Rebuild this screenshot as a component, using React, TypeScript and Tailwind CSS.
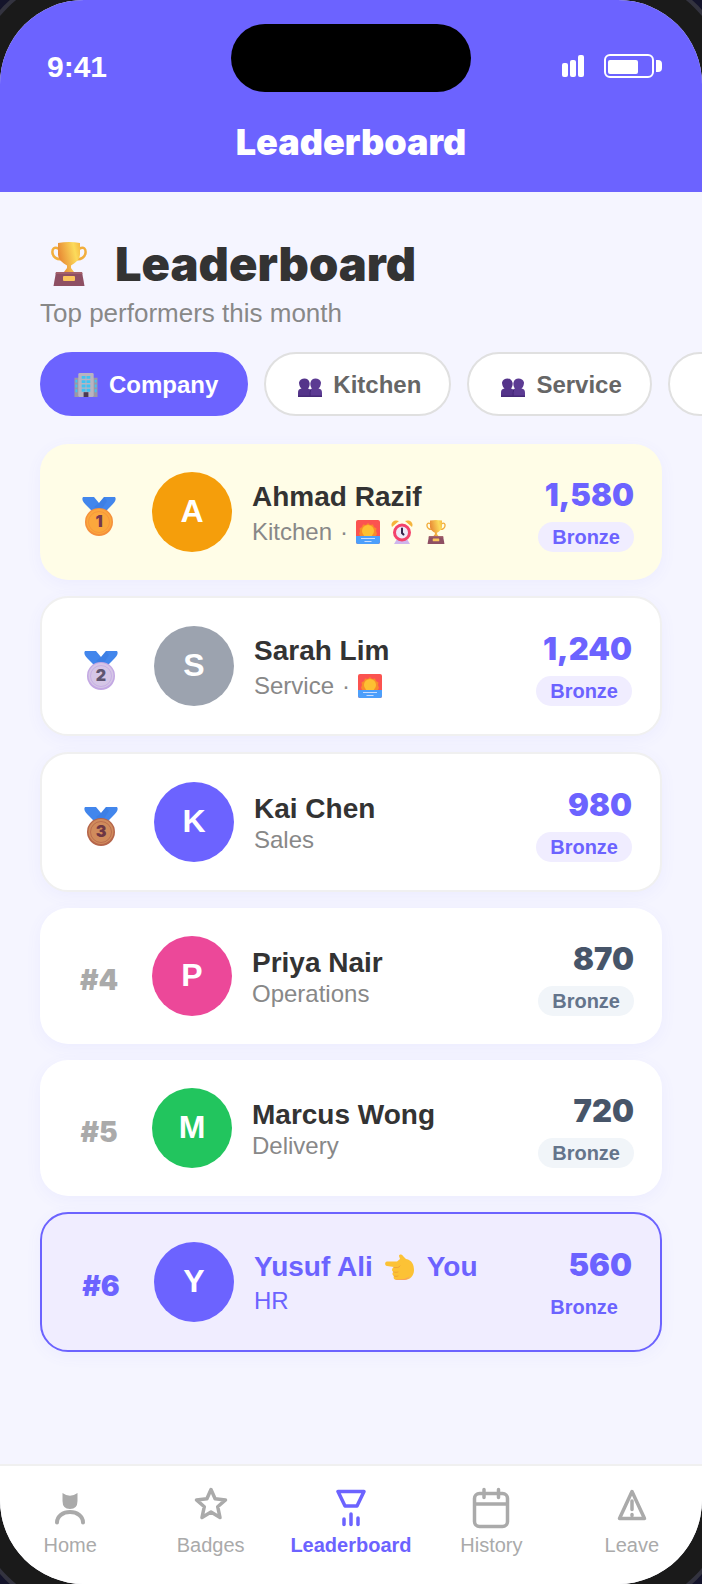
import { useState, type ReactNode } from 'react'

interface Member {
  rank: number
  name: string
  team: string
  points: string
  avatar: string
  awards?: string[]
  me?: boolean
}

const members: Member[] = [
  { rank: 1, name: 'Ahmad Razif', team: 'Kitchen', points: '1,580', avatar: 'bg-[#f59e0b]', awards: ['sunrise', 'clock', 'trophy'] },
  { rank: 2, name: 'Sarah Lim', team: 'Service', points: '1,240', avatar: 'bg-[#9ca3af]', awards: ['sunrise'] },
  { rank: 3, name: 'Kai Chen', team: 'Sales', points: '980', avatar: 'bg-[#6c63ff]' },
  { rank: 4, name: 'Priya Nair', team: 'Operations', points: '870', avatar: 'bg-[#ec4899]' },
  { rank: 5, name: 'Marcus Wong', team: 'Delivery', points: '720', avatar: 'bg-[#22c55e]' },
  { rank: 6, name: 'Yusuf Ali', team: 'HR', points: '560', avatar: 'bg-[#6c63ff]', me: true },
]

function Trophy({ className }: { className: string }) {
  return (
    <svg viewBox="0 0 36 44" className={className} aria-hidden="true">
      <defs>
        <linearGradient id="cup" x1="0" x2="1" y1="0.3" y2="0">
          <stop offset="0" stopColor="#e88b35" />
          <stop offset="0.7" stopColor="#fcdb5b" />
          <stop offset="1" stopColor="#f6b840" />
        </linearGradient>
      </defs>
      <path d="M8 7C3 4 1 7 1.500 11S6 18 11 17M28 7C33 4 35 7 34.500 11S30 18 25 17" fill="none" stroke="#f2ae3d" strokeWidth="2.500" />
      <path d="M7 1Q18-1 29 1V12C29 18 24 21 20 23.500V26L23 30H13L16 26V23.500C12 21 7 18 7 12Z" fill="url(#cup)" />
      <path d="M5 30H31L33.500 44H2.500Z" fill="#8e4f63" />
      <path d="M5 30H31L31.500 32H4.500Z" fill="#a3606a" />
      <rect x="12" y="34" width="12" height="5" rx="1" fill="#fbc45b" />
    </svg>
  )
}

function Building() {
  return (
    <svg viewBox="0 0 24 25" className="h-6 w-6" aria-hidden="true">
      <path d="M0 5h6v20H0zM18 5h6v20h-6z" fill="#9b98a6" />
      <rect x="4" y="0" width="16" height="25" rx="1.500" fill="#b9b4c0" />
      <path d="M1 7h2v3H1zm0 5h2v3H1zm0 5h2v3H1zM21 7h2v3h-2zm0 5h2v3h-2zm0 5h2v3h-2zM7.500 3h4v3h-4zm5 0h4v3h-4zm-5 4.500h4v3h-4zm5 0h4v3h-4zm-5 4.500h4v3h-4zm5 0h4v3h-4zm-5 4.500h4v3h-4zm5 0h4v3h-4z" fill="#41c3f2" />
      <rect x="9.500" y="20" width="5" height="5" fill="#4b3b52" />
    </svg>
  )
}

function People() {
  return (
    <svg viewBox="0 0 24 24" className="h-6 w-6" aria-hidden="true">
      <path d="M0 24V20C0 17 1 16 3.500 15.500C1.500 14 1 11 1 9.500C1.500 7 4 5.500 6.500 5.500S11 7 11.500 9.500C12 11 11.500 14 10 15.500C12 16 13 17 13 20V24Z" fill="#54348a" />
      <path d="M11 24V20C11 17 12 16 14 15.500C12.500 14 12 11 12.500 9.500C13 7 15 5.500 17.500 5.500S22.500 7 23 9.500C23 11 22.500 14 20.500 15.500C23 16 24 17 24 20V24Z" fill="#5c3b93" />
      <path d="M12 24V19.500L12.500 17" fill="none" stroke="#3c2171" />
      <path d="M0 22.500H24V24H0Z" fill="#462a78" />
    </svg>
  )
}

function Sunrise() {
  return (
    <svg viewBox="0 0 24 24" className="h-6 w-6" aria-hidden="true">
      <rect width="24" height="24" rx="2" fill="#fb5350" />
      <path d="M12 3L14 5L17 4.500L18 7L20.500 8.500L20 11L21 14L19 17H5L3 14L4 11L3.500 8.500L6 7L7 4.500L10 5Z" fill="#f98b2b" />
      <circle cx="12" cy="11" r="6" fill="#fdc032" />
      <path d="M0 16H24V22A2 2 0 0 1 22 24H2A2 2 0 0 1 0 22Z" fill="#4c9ffb" />
      <path d="M5 18.500H19M8.500 21.500H15.500" stroke="#c9ddff" strokeWidth="1.200" />
    </svg>
  )
}

function AlarmClock() {
  return (
    <svg viewBox="0 0 24 24" className="h-6 w-6" aria-hidden="true">
      <path d="M4 24L7 19H17L20 24Z" fill="#cfb6ec" />
      <path d="M2 7C0 3 4-1 9 1ZM22 7C24 3 20-1 15 1Z" fill="#f5b53c" />
      <circle cx="12" cy="12.500" r="7.500" fill="#eee9f8" stroke="#f4426c" strokeWidth="3" />
      <path d="M12 8.500V13L13.500 14.500" fill="none" stroke="#35244c" strokeWidth="2" strokeLinecap="round" />
    </svg>
  )
}

function PointLeft() {
  return (
    <svg viewBox="0 0 30 26" className="h-[26px] w-[30px]" aria-hidden="true">
      <path d="M2 7.500H12L15 5L14 2C14 0 17 0 18 2L21 5C27 6 29 11 29 16C29 22 25 26 19 26H12C9 26 8 24 9 22C7 21 7 19 8.500 18C6.500 17 6.500 14 9 13L2 12C-.5 11.500-.5 8 2 7.500Z" fill="#fcc235" />
      <path d="M9 22C10 22.500 12 22.500 13 22M8.500 18C10 18.500 12 18.500 13 18M9 13.500C12 13.500 14 14 15 12" fill="none" stroke="#f0a535" strokeLinecap="round" />
      <path d="M10 25Q18 27 25 22.500Q22 26 18 26H12Z" fill="#f79a68" />
    </svg>
  )
}

function Medal({ rank }: { rank: number }) {
  const rim = ['#f5903c', '#c3a8e3', '#b5654a'][rank - 1]
  const face = ['#fba73c', '#d5c6e6', '#d08b5c'][rank - 1]
  const ink = ['#74384f', '#5f5570', '#6d3644'][rank - 1]
  return (
    <svg viewBox="0 0 34 39" className="h-[39px] w-[34px]" role="img" aria-label={`Rank ${rank}`}>
      <path d="M1 0H12L17 6L22 0H33C35 3 32 6 29 9L24 14H10L5 9C2 6-1 3 1 0Z" fill="#4286ec" />
      <path d="M17 6L22 0L25 4L20 12H14L12 10Z" fill="#3170d3" opacity="0.300" />
      <circle cx="17" cy="25" r="14" fill={rim} />
      <circle cx="17" cy="24.500" r="12.500" fill={face} />
      <circle cx="17" cy="25" r="10.500" fill="none" stroke={rim} strokeWidth="0.800" />
      <text x="17" y="30" textAnchor="middle" fill={ink} className="font-[Inter] text-[16px] font-black">{rank}</text>
    </svg>
  )
}

function Award({ kind }: { kind: string }) {
  if (kind === 'sunrise') return <Sunrise />
  if (kind === 'clock') return <AlarmClock />
  return <Trophy className="h-6 w-6" />
}

function Row({ m }: { m: Member }) {
  let card = 'bg-white'
  if (m.rank === 1) card = 'bg-[#fffde7]'
  else if (m.me) card = 'border-2 border-[#6c63ff] bg-[#f0edff]'
  else if (m.rank <= 3) card = 'border-2 border-[#f0f0f0] bg-white'
  const strong = m.rank <= 3 || m.me

  let gap = 'mt-[3px]'
  if (m.awards) gap = 'mt-[7px]'
  else if (m.me) gap = 'mt-[6px]'

  return (
    <li className={`flex items-center gap-5 rounded-[28px] p-7 shadow-[0_4px_16px_rgba(108,99,255,0.06)] ${card}`}>
      <div className="flex w-16 shrink-0 justify-center pt-2 pr-[2px]">
        {m.rank <= 3 ? (
          <Medal rank={m.rank} />
        ) : (
          <span className={`font-[Inter,sans-serif] text-[28px] leading-8 font-black ${m.me ? 'text-[#6c63ff]' : 'text-[#aaa]'}`}>
            #{m.rank}
          </span>
        )}
      </div>
      <div className={`flex size-20 shrink-0 items-center justify-center rounded-full pb-[2px] text-[32px] font-bold text-white ${m.avatar}`}>
        {m.name[0]}
      </div>
      <div className="min-w-0 flex-1">
        <div className={`flex items-center gap-3 text-[28px] leading-8 font-bold ${m.me ? 'text-[#6c63ff]' : 'text-[#333]'}`}>
          {m.name}
          {m.me && <><PointLeft /> You</>}
        </div>
        <div className={`flex items-center text-2xl leading-6 ${gap} ${m.me ? 'text-[#6c63ff]' : 'text-[#888]'}`}>
          {m.team}
          {m.awards && (
            <>
              <span className="mx-2">·</span>
              <span className="flex gap-[10px]">
                {m.awards.map((a) => <Award key={a} kind={a} />)}
              </span>
            </>
          )}
        </div>
      </div>
      <div className="flex shrink-0 flex-col items-end gap-1">
        <span className={`font-[Inter,sans-serif] text-[31px] leading-[46px] font-black ${strong ? 'text-[#6c63ff]' : 'text-[#475569]'}`}>
          {m.points}
        </span>
        <span className={`rounded-full px-[14px] text-xl leading-[30px] font-bold ${strong ? 'bg-[#f0edff] text-[#6c63ff]' : 'bg-[#f1f5f9] text-[#64748b]'}`}>
          Bronze
        </span>
      </div>
    </li>
  )
}

const tabs: { label: string; icon: ReactNode }[] = [
  {
    label: 'Home',
    icon: (
      <>
        <path d="M16.500 7Q24 12.500 31.500 7V15Q31.500 23 24 23T16.500 15Z" fill="currentColor" stroke="none" />
        <path d="M11 36.500C11 30 17 26 24 26S37 30 37 36.500" strokeWidth="4" />
      </>
    ),
  },
  {
    label: 'Badges',
    icon: <path d="M24 3.500L28.100 12.800L38.500 13.900L30.700 20.700L33 31.500L24 26L15 31.500L17.300 20.700L9.500 13.900L19.900 12.800Z" />,
  },
  {
    label: 'Leaderboard',
    icon: <path d="M11 5.500H37L30 20H18ZM17 33V38.500M24 28V38.500M31 32V38.500" />,
  },
  {
    label: 'History',
    icon: (
      <>
        <rect x="7.500" y="7.500" width="33" height="33" rx="5" />
        <path d="M8 18H40M17 3.500V11.500M31.500 3.500V11.500" />
      </>
    ),
  },
  {
    label: 'Leave',
    icon: <path d="M24 5.500L36.500 32.500H11.500ZM24 15V23.500M24 28.500V29.500" />,
  },
]

export default function App() {
  const [group, setGroup] = useState('Company')

  return (
    <div className="min-h-screen overflow-hidden bg-[#14142b] font-['Liberation_Sans',Arial,sans-serif]">
      <div className="flex min-h-screen flex-col overflow-hidden rounded-[84px] bg-[#f5f5ff] shadow-[0_0_0_24px_#1a1a1a,0_0_0_28px_#33333f]">
        <header className="bg-[#6c63ff] pt-6 pb-6 text-white">
          <div className="grid h-[68px] grid-cols-[1fr_auto_1fr] items-center">
            <span className="pt-[18px] pl-[47px] text-[30px] leading-9 font-bold">9:41</span>
            <div className="h-[68px] w-60 rounded-full bg-black" />
            <div className="flex items-center justify-end gap-5 pt-4 pr-10">
              <div className="flex h-[22px] items-end gap-[2px]">
                <i className="h-[14px] w-[6px] rounded-[2px] bg-white" />
                <i className="h-[17px] w-[6px] rounded-[2px] bg-white" />
                <i className="h-[22px] w-[6px] rounded-[2px] bg-white" />
              </div>
              <div className="flex items-center gap-[2px]">
                <div className="h-6 w-[50px] rounded-[6px] border-2 border-white px-[2px] pt-1">
                  <div className="h-[14px] w-[30px] rounded-[2px] bg-white" />
                </div>
                <div className="h-3 w-[6px] rounded-r-[4px] bg-white" />
              </div>
            </div>
          </div>
          <div className="mt-6 text-center font-[Inter,sans-serif] text-[36px] leading-[52px] font-black">Leaderboard</div>
        </header>

        <main className="flex-1 px-10 pt-10 pb-10">
          <h1 className="flex items-center pl-[11px] font-[Inter,sans-serif] text-[47px] leading-[64px] font-black text-[#333]">
            <Trophy className="mr-7 h-11 w-9" />
            Leaderboard
          </h1>
          <p className="text-[26px] leading-[34px] text-[#888]">Top performers this month</p>

          <div className="-mr-10 mt-[22px] flex gap-4 overflow-x-auto [scrollbar-width:none]">
            {['Company', 'Kitchen', 'Service', 'Sales'].map((g) => (
              <button
                key={g}
                onClick={() => setGroup(g)}
                className={`flex h-16 shrink-0 items-center gap-[11px] rounded-full border-2 pr-7 pl-8 pt-[2px] text-2xl font-bold ${
                  g === group ? 'border-[#6c63ff] bg-[#6c63ff] text-white' : 'border-[#e0e0e0] bg-white text-[#666]'
                }`}
              >
                {g === 'Company' ? <Building /> : <People />}
                {g}
              </button>
            ))}
          </div>

          <ul className="mt-7 flex flex-col gap-4">
            {members.map((m) => <Row key={m.rank} m={m} />)}
          </ul>
        </main>

        <nav className="grid h-[120px] grid-cols-5 border-t-2 border-[#f0f0f0] bg-white">
          {tabs.map((t) => (
            <a
              key={t.label}
              href="#"
              className={`flex flex-col items-center pt-5 text-xl leading-[22px] ${
                t.label === 'Leaderboard' ? 'font-bold text-[#6c63ff]' : 'text-[#aaa]'
              }`}
            >
              <svg
                viewBox="0 0 48 48"
                className="size-12"
                fill="none"
                stroke="currentColor"
                strokeWidth="3.500"
                strokeLinecap="round"
                strokeLinejoin="round"
                aria-hidden="true"
              >
                {t.icon}
              </svg>
              {t.label}
            </a>
          ))}
        </nav>
      </div>
    </div>
  )
}
